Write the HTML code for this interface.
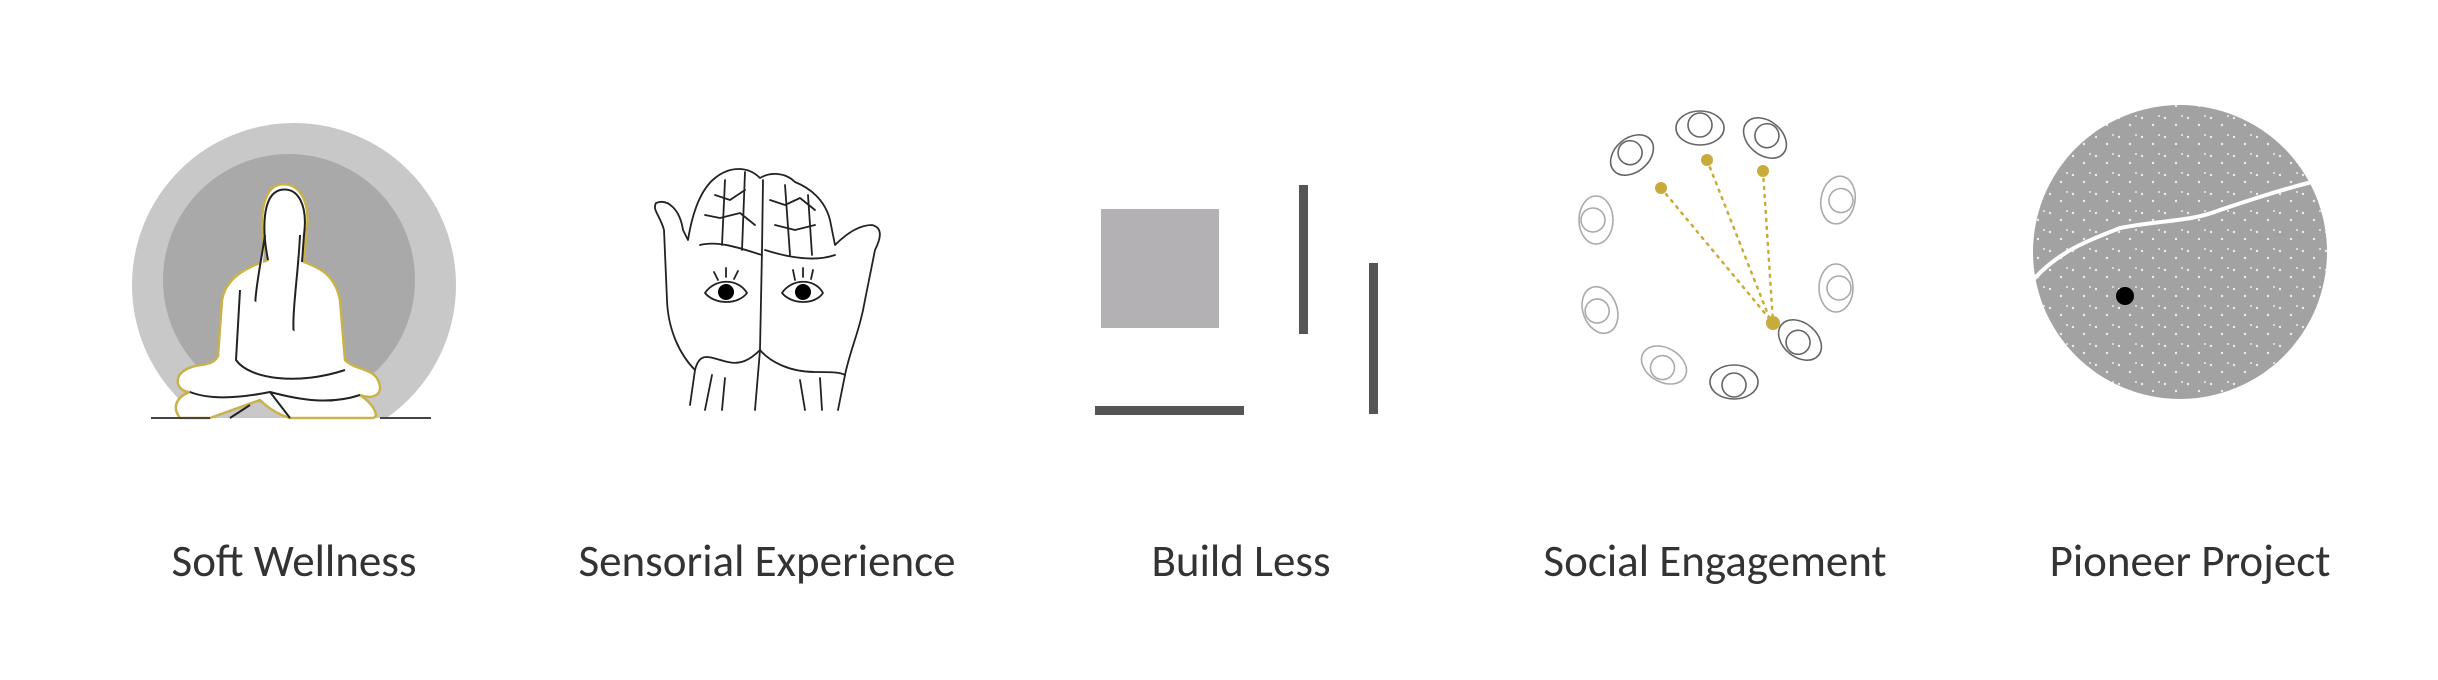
<!DOCTYPE html>
<html><head><meta charset="utf-8"><style>
html,body{margin:0;padding:0;background:#fff;width:2438px;height:680px;overflow:hidden}
.t{position:absolute;top:534px;font-family:Calibri,"Liberation Sans",sans-serif;font-size:45px;color:#333;transform:translateX(-50%);white-space:nowrap;letter-spacing:0px}
</style></head><body>
<svg width="2438" height="680" style="position:absolute;left:0;top:0" xmlns="http://www.w3.org/2000/svg">
<defs>
<clipPath id="cg"><rect x="0" y="0" width="600" height="418"/></clipPath>
<clipPath id="cp"><circle cx="2180" cy="252" r="147"/></clipPath>
<pattern id="dots" width="23" height="19" patternUnits="userSpaceOnUse">
<circle cx="3" cy="4" r="1.2" fill="#fff"/><circle cx="14" cy="11" r="1.2" fill="#fff"/><circle cx="20" cy="2" r="1" fill="#fff"/>
</pattern>
</defs>
<g clip-path="url(#cg)">
<circle cx="294" cy="285" r="162" fill="#c8c8c8"/>
<circle cx="289" cy="280" r="126" fill="#a9a9a9"/>
</g>
<g fill="#fff" stroke="#222" stroke-width="2" stroke-linejoin="round">
<path d="M268 260 C258 230 260 190 278 185 C298 180 312 200 306 235 L304 262 C320 268 335 275 340 300 L345 360 C355 370 372 368 378 380 C385 395 372 400 360 395 C375 405 380 418 372 418 L290 418 C280 415 270 410 260 400 L210 418 L180 418 C170 405 180 395 190 392 C178 392 172 378 185 370 C198 362 212 368 218 356 L222 300 C226 278 245 268 268 260 Z" stroke="#c9b24a" stroke-width="2.5"/>
<path d="M268 260 C262 230 262 195 280 190 C298 186 308 205 304 235 L302 262" />
<path d="M265 235 C260 270 250 310 258 330 M300 235 C298 280 290 320 295 345"/>
<path d="M240 290 L236 360 C250 380 300 385 345 370"/>
<path d="M190 392 C210 400 240 398 270 392 C300 400 330 405 360 395"/>
<path d="M270 392 L290 418 M250 405 L230 418"/>
</g>
<line x1="151" y1="418" x2="210" y2="418" stroke="#444" stroke-width="2"/>
<line x1="380" y1="418" x2="431" y2="418" stroke="#444" stroke-width="2"/>
<g fill="none" stroke="#222" stroke-width="1.8" stroke-linejoin="round" stroke-linecap="round">
<path d="M690 405 L695 370 C680 355 668 330 667 300 L664 230 C660 215 652 210 656 203 C668 198 680 210 683 230 L688 240 C692 215 700 190 715 178 C730 166 748 166 760 178 C770 172 785 172 795 182 C810 188 825 200 830 220 L835 245 C845 235 858 225 872 225 C884 228 880 240 875 250 L865 300 C860 330 850 350 845 375 L838 410"/>
<path d="M763 180 L762 250 L760 350 L755 410"/>
<path d="M760 350 C750 360 740 365 728 362 C710 358 700 350 695 370"/>
<path d="M760 350 C770 362 790 372 815 372 C830 372 840 372 845 375"/>
<path d="M700 245 C720 240 745 250 762 255 M765 250 C790 258 815 262 835 255"/>
<path d="M705 215 L720 218 L740 213 L755 225 M715 195 L730 200 L745 190 M770 200 L785 205 L800 198 L815 210 M775 225 L795 230 L815 225"/>
<path d="M725 180 L722 245 M745 172 L742 250 M785 185 L790 255 M808 195 L812 255"/>
<path d="M705 293 C715 278 738 278 747 293 C738 305 715 305 705 293 Z M782 293 C792 278 815 278 823 293 C815 305 792 305 782 293 Z"/>
<path d="M718 280 L714 272 M726 277 L726 268 M734 279 L738 271 M795 280 L793 270 M803 277 L803 268 M811 279 L813 270"/>
<path d="M712 375 L705 410 M725 378 L722 410 M800 380 L805 410 M820 378 L822 410"/>
</g>
<circle cx="726" cy="292" r="8" fill="#000"/><circle cx="803" cy="292" r="8" fill="#000"/>
<rect x="1101" y="209" width="118" height="119" fill="#b3b1b4"/>
<rect x="1299" y="185" width="9" height="149" fill="#555"/>
<rect x="1369" y="263" width="9" height="151" fill="#555"/>
<rect x="1095" y="406" width="149" height="9" fill="#555"/>
<g fill="none" stroke="#c9ab3c" stroke-width="2.5" stroke-dasharray="2 6" stroke-linecap="round">
<line x1="1661" y1="188" x2="1773" y2="323"/>
<line x1="1707" y1="160" x2="1771" y2="322"/>
<line x1="1763" y1="171" x2="1773" y2="322"/>
</g>
<g fill="#c9ab3c"><circle cx="1661" cy="188" r="6"/><circle cx="1707" cy="160" r="6"/><circle cx="1763" cy="171" r="6"/><circle cx="1773" cy="323" r="7"/></g>
<g fill="#fff" stroke-width="1.6">
<g stroke="#666">
<g transform="translate(1632,155) rotate(-40)"><ellipse cx="0" cy="0" rx="24" ry="17"/><circle cx="0" cy="-3" r="12"/></g>
<g transform="translate(1700,128)"><ellipse cx="0" cy="0" rx="24" ry="17"/><circle cx="0" cy="-3" r="12"/></g>
<g transform="translate(1765,138) rotate(40)"><ellipse cx="0" cy="0" rx="24" ry="17"/><circle cx="0" cy="-3" r="12"/></g>
<g transform="translate(1800,340) rotate(-140)"><ellipse cx="0" cy="0" rx="24" ry="17"/><circle cx="0" cy="-3" r="12"/></g>
<g transform="translate(1734,382) rotate(180)"><ellipse cx="0" cy="0" rx="24" ry="17"/><circle cx="0" cy="-3" r="12"/></g>
</g>
<g stroke="#aaa">
<g transform="translate(1838,200) rotate(100)"><ellipse cx="0" cy="0" rx="24" ry="17"/><circle cx="0" cy="-3" r="12"/></g>
<g transform="translate(1836,288) rotate(90)"><ellipse cx="0" cy="0" rx="24" ry="17"/><circle cx="0" cy="-3" r="12"/></g>
<g transform="translate(1664,365) rotate(-150)"><ellipse cx="0" cy="0" rx="24" ry="17"/><circle cx="0" cy="-3" r="12"/></g>
<g transform="translate(1600,310) rotate(-110)"><ellipse cx="0" cy="0" rx="24" ry="17"/><circle cx="0" cy="-3" r="12"/></g>
<g transform="translate(1596,220) rotate(-90)"><ellipse cx="0" cy="0" rx="24" ry="17"/><circle cx="0" cy="-3" r="12"/></g>
</g>
</g>
<circle cx="2180" cy="252" r="147" fill="#a2a2a2"/>
<rect x="2030" y="100" width="300" height="300" fill="url(#dots)" clip-path="url(#cp)" opacity="0.8"/>
<path d="M2033 280 C2060 250 2090 240 2120 228 C2160 220 2190 222 2220 210 C2250 200 2280 190 2312 182" fill="none" stroke="#fff" stroke-width="4" clip-path="url(#cp)"/>
<circle cx="2125" cy="296" r="9" fill="#000"/>
</svg>
<div class="t" style="left:294px">Soft Wellness</div>
<div class="t" style="left:767px">Sensorial Experience</div>
<div class="t" style="left:1241px">Build Less</div>
<div class="t" style="left:1715px">Social Engagement</div>
<div class="t" style="left:2190px">Pioneer Project</div>
</body></html>
